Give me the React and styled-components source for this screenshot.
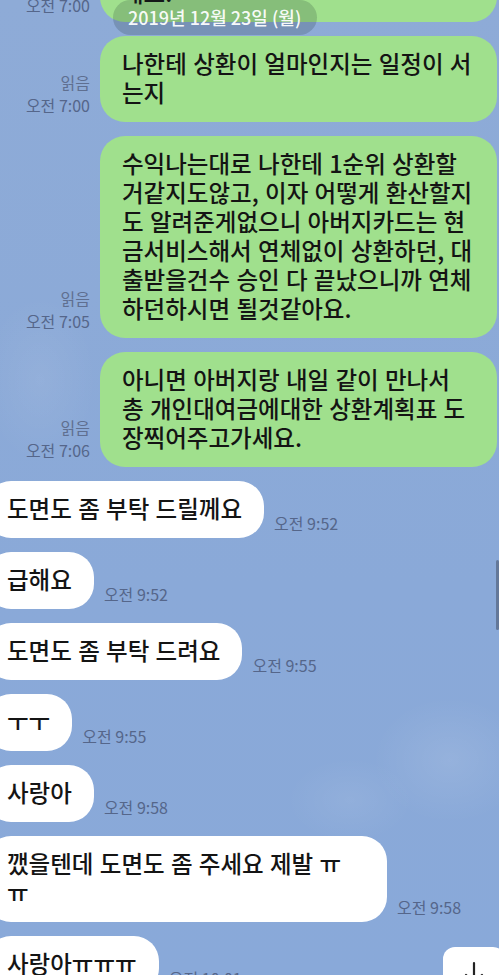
import React from "react";
import styled, { createGlobalStyle } from "styled-components";

const GlobalStyle = createGlobalStyle`
  html, body { margin: 0; padding: 0; }
  body {
    background: #8dabd7;
    font-family: "Noto Sans CJK KR", "Noto Sans", sans-serif;
  }
`;

const Screen = styled.div`
  position: relative;
  width: 499px;
  height: 975px;
  overflow: hidden;
  background:
    radial-gradient(ellipse 110px 90px at 450px 760px, rgba(255,255,255,0.10), rgba(255,255,255,0) 70%),
    radial-gradient(ellipse 90px 60px at 350px 800px, rgba(255,255,255,0.07), rgba(255,255,255,0) 70%),
    radial-gradient(ellipse 80px 120px at 40px 380px, rgba(255,255,255,0.07), rgba(255,255,255,0) 70%),
    linear-gradient(180deg, #8eabd7 0%, #8aa9d8 60%, #89a9d9 100%);
`;

const Chat = styled.div`
  display: flex;
  flex-direction: column;
  gap: 14px;
  margin-top: -35px;
`;

const Row = styled.div`
  display: flex;
  align-items: flex-end;
  gap: 10px;
  flex-direction: ${(p) => (p.$mine ? "row" : "row-reverse")};
  justify-content: ${(p) => (p.$mine ? "flex-start" : "flex-end")};
  padding-right: ${(p) => (p.$mine ? "2px" : "0")};
  margin-left: ${(p) => (p.$mine ? "0" : "-14px")};
`;

const Meta = styled.div`
  flex-shrink: 0;
  display: flex;
  flex-direction: column;
  align-items: ${(p) => (p.$mine ? "flex-end" : "flex-start")};
  width: ${(p) => (p.$mine ? "90px" : "auto")};
  font-size: 16px;
  line-height: ${(p) => (p.$mine ? "23px" : "20px")};
  padding-bottom: ${(p) => (p.$mine ? "5px" : "5px")};
  color: #55668a;
  white-space: nowrap;
`;

const ReadMark = styled.span`
  color: #5f6f90;
`;

const Bubble = styled.div`
  box-sizing: border-box;
  background: ${(p) => (p.$mine ? "#a0e08d" : "#ffffff")};
  border-radius: 25px;
  font-size: 23.5px;
  font-weight: 500;
  line-height: 29px;
  color: #141414;
  word-spacing: 1px;
  padding: ${(p) => (p.$mine ? "13px 14px 15px 22px" : "13px 22px 15px 21px")};
  ${(p) =>
    p.$mine
      ? "flex: 1; white-space: nowrap;"
      : "max-width: 401px; flex-shrink: 1;"}
`;

const DatePill = styled.div`
  position: absolute;
  top: 0;
  left: 113px;
  height: 35px;
  padding: 0 16px 0 15px;
  border-radius: 18px;
  background: rgba(20, 40, 40, 0.19);
  color: rgba(255, 255, 255, 0.96);
  font-size: 18px;
  font-weight: 500;
  line-height: 35px;
  white-space: nowrap;
`;

const ScrollBar = styled.div`
  position: absolute;
  right: 0;
  top: 560px;
  width: 3px;
  height: 70px;
  border-radius: 2px;
  background: rgba(75, 88, 112, 0.6);
`;

const DownButton = styled.div`
  position: absolute;
  left: 443px;
  top: 947px;
  width: 62px;
  height: 50px;
  border-radius: 12px;
  background: #ffffff;
  display: flex;
  justify-content: center;
`;

function Sent({ lines, time, read = true }) {
  return (
    <Row $mine>
      <Meta $mine>
        {read && <ReadMark>읽음</ReadMark>}
        <span>{time}</span>
      </Meta>
      <Bubble $mine>
        {lines.map((l, i) => (
          <React.Fragment key={i}>
            {i > 0 && <br />}
            {l}
          </React.Fragment>
        ))}
      </Bubble>
    </Row>
  );
}

function Received({ text, time }) {
  return (
    <Row>
      <Meta>{time}</Meta>
      <Bubble>{text}</Bubble>
    </Row>
  );
}

export default function App() {
  return (
    <>
      <GlobalStyle />
      <Screen>
        <Chat>
          <Sent lines={["해요."]} time="오전 7:00" />
          <Sent
            lines={["나한테 상환이 얼마인지는 일정이 서", "는지"]}
            time="오전 7:00"
          />
          <Sent
            lines={[
              "수익나는대로 나한테 1순위 상환할",
              "거같지도않고, 이자 어떻게 환산할지",
              "도 알려준게없으니 아버지카드는 현",
              "금서비스해서 연체없이 상환하던, 대",
              "출받을건수 승인 다 끝났으니까 연체",
              "하던하시면 될것같아요.",
            ]}
            time="오전 7:05"
          />
          <Sent
            lines={[
              "아니면 아버지랑 내일 같이 만나서",
              "총 개인대여금에대한 상환계획표 도",
              "장찍어주고가세요.",
            ]}
            time="오전 7:06"
          />
          <Received text="도면도 좀 부탁 드릴께요" time="오전 9:52" />
          <Received text="급해요" time="오전 9:52" />
          <Received text="도면도 좀 부탁 드려요" time="오전 9:55" />
          <Received text="ㅜㅜ" time="오전 9:55" />
          <Received text="사랑아" time="오전 9:58" />
          <Received text="깼을텐데 도면도 좀 주세요 제발 ㅠ ㅠ" time="오전 9:58" />
          <Received text="사랑아ㅠㅠㅠ" time="오전 10:01" />
        </Chat>
        <DatePill>2019년 12월 23일 (월)</DatePill>
        <ScrollBar />
        <DownButton>
          <svg width="30" height="40" viewBox="0 0 30 40" fill="none">
            <path d="M15 16 V36 M7 28 L15 36 L23 28" stroke="#222" strokeWidth="2.2" strokeLinecap="round" strokeLinejoin="round" />
          </svg>
        </DownButton>
      </Screen>
    </>
  );
}
